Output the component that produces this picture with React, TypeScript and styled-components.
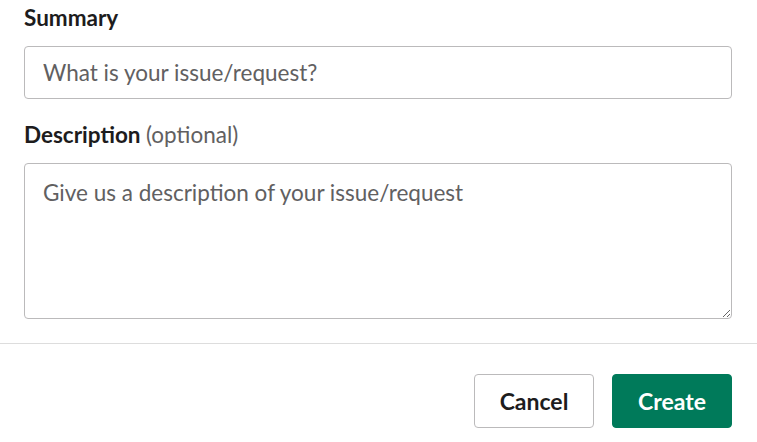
import React from 'react';
import styled, { createGlobalStyle } from 'styled-components';

const Colors = {
    text: '#1d1c1d',
    muted: '#616061',
    border: '#bbbabb',
    divider: '#dddddd',
    green: '#007a5a',
    white: '#ffffff',
};

const GlobalStyle = createGlobalStyle`
    html, body {
        margin: 0;
        padding: 0;
        background: ${Colors.white};
    }
    body {
        font-family: Lato, 'Noto Sans', sans-serif;
        color: ${Colors.text};
    }
`;

function App() {
    return (
        <Page>
            <GlobalStyle />
            <Form>
                <Label htmlFor="summary">Summary</Label>
                <Input id="summary" placeholder="What is your issue/request?" />
                <Label htmlFor="description" $spaced>
                    Description <Optional>(optional)</Optional>
                </Label>
                <TextArea
                    id="description"
                    placeholder="Give us a description of your issue/request"
                />
            </Form>
            <Footer>
                <SecondaryButton>Cancel</SecondaryButton>
                <PrimaryButton>Create</PrimaryButton>
            </Footer>
        </Page>
    );
}

const Page = styled.div`
    width: 757px;
    display: flex;
    flex-direction: column;
`;

const Form = styled.div`
    display: flex;
    flex-direction: column;
    padding: 4px 25px 24px 24px;
`;

const Label = styled.label<{ $spaced?: boolean }>`
    font-size: 22.5px;
    font-weight: 700;
    line-height: 28px;
    color: ${Colors.text};
    margin: ${(p) => (p.$spaced ? '22px' : '0')} 0 14px;
`;

const Optional = styled.span`
    font-weight: 400;
    color: ${Colors.muted};
`;

const fieldBase = `
    box-sizing: border-box;
    width: 100%;
    border: 1px solid ${Colors.border};
    border-radius: 4px;
    font-family: Lato, 'Noto Sans', sans-serif;
    font-size: 22.5px;
    color: ${Colors.text};
    background: ${Colors.white};
    outline: none;

    &::placeholder {
        color: ${Colors.muted};
        opacity: 1;
    }
`;

const Input = styled.input`
    ${fieldBase}
    height: 53px;
    padding: 0 18px;
`;

const TextArea = styled.textarea`
    ${fieldBase}
    height: 156px;
    padding: 15px 18px;
    line-height: 28px;
    resize: vertical;
`;

const Footer = styled.div`
    display: flex;
    justify-content: flex-end;
    gap: 18px;
    border-top: 1px solid ${Colors.divider};
    padding: 30px 25px 14px;
`;

const PrimaryButton = styled.button`
    box-sizing: border-box;
    width: 120px;
    height: 54px;
    border-radius: 4px;
    border: 1px solid ${Colors.green};
    background: ${Colors.green};
    color: ${Colors.white};
    font-family: Lato, 'Noto Sans', sans-serif;
    font-size: 23px;
    font-weight: 700;
    cursor: pointer;
`;

const SecondaryButton = styled(PrimaryButton)`
    background: ${Colors.white};
    color: ${Colors.text};
    border-color: ${Colors.border};
`;

export default App;
